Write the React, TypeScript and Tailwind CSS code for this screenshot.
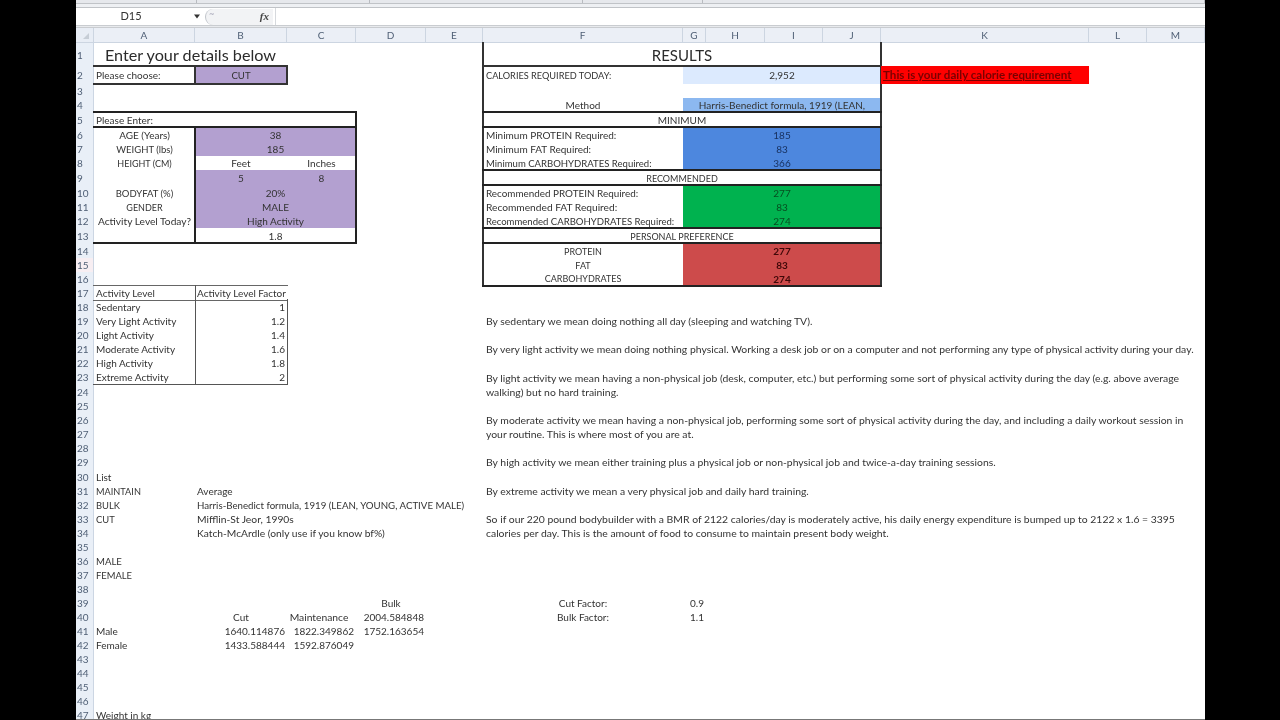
import React from "react";

const COLS: [string, number][] = [["A",101],["B",92],["C",69],["D",70],["E",57],["F",200],["G",23],["H",59],["I",58],["J",58],["K",208],["L",58],["M",58]];
const ROWS = [23,18,14,14,15,15,14,14,15,15,14,14,15,15,14,14,14,14,14,14,14,14,14,15,14,14,14,13,15,15,14,14,14,14,14,14,14,14,14,14,14,14,14,14,14,14,14];
const RIBBON = [121,173,213,120,502];
const A=2,B=3,C=4,D=5,F=7,G=8,K=12;

type P = { r:number; c:number; rs?:number; cs?:number; className?:string; children?:React.ReactNode };
function X({r,c,rs=1,cs=1,className="",children}:P){
  return <div className={"flex items-center whitespace-nowrap min-w-0 "+className} style={{gridRow:`${r+1} / span ${rs}`,gridColumn:`${c} / span ${cs}`}}>{children}</div>;
}
const L=(p:P)=><X {...p} className={"justify-start pl-[2px] "+(p.className||"")}/>;
const M=(p:P)=><X {...p} className={"justify-center "+(p.className||"")}/>;
const R=(p:P)=><X {...p} className={"justify-end pr-[2px] "+(p.className||"")}/>;
const Frame=({r,c,rs=1,cs=1,className=""}:P)=>(
  <div className={"-m-px pointer-events-none "+className} style={{gridRow:`${r+1} / span ${rs}`,gridColumn:`${c} / span ${cs}`}}/>
);

const PURPLE="bg-[#b3a0d0]";
const notes:[number,number,React.ReactNode][]=[
 [19,1,"By sedentary we mean doing nothing all day (sleeping and watching TV)."],
 [21,1,"By very light activity we mean doing nothing physical. Working a desk job or on a computer and not performing any type of physical activity during your day."],
 [23,2,<>By light activity we mean having a non-physical job (desk, computer, etc.) but performing some sort of physical activity during the day (e.g. above average<br/>walking) but no hard training.</>],
 [26,2,<>By moderate activity we mean having a non-physical job, performing some sort of physical activity during the day, and including a daily workout session in<br/>your routine. This is where most of you are at.</>],
 [29,1,"By high activity we mean either training plus a physical job or non-physical job and twice-a-day training sessions."],
 [31,1,"By extreme activity we mean a very physical job and daily hard training."],
 [33,2,<>So if our 220 pound bodybuilder with a BMR of 2122 calories/day is moderately active, his daily energy expenditure is bumped up to 2122 x 1.6 = 3395<br/>calories per day. This is the amount of food to consume to maintain present body weight.</>],
];

export default function App(){
  return (
    <div className="w-[1280px] h-[720px] bg-black flex overflow-hidden font-['Lato','Liberation_Sans',sans-serif] text-[10px] text-[#303030]">
      <div className="ml-[76px] w-[1129px] h-[720px] bg-white flex flex-col overflow-hidden blur-[0.35px] border-b border-[#777]">
        <div className="h-[3px] bg-[#e6e8ec] flex shrink-0">
          {RIBBON.map((w,i)=><div key={i} className="h-[3px] border-r border-[#b8bbc0]" style={{width:w}}/>)}
        </div>
        <div className="h-[5px] bg-[#eef0f3] border-y border-[#c0c3c7] shrink-0"/>
        <div className="h-[17px] bg-white flex items-center shrink-0">
          <div className="w-[110px] text-center text-[#333] text-[11px]">D15</div>
          <svg width="8" height="5" viewBox="0 0 8 5" className="ml-[7px]"><path d="M1 0.5h6L4 4.5z" fill="#333"/></svg>
          <div className="ml-[4px] w-[68px] h-[16px] bg-[#f2f3f5] rounded-l-full border-l border-[#c0c4ca] flex items-center">
            <span className="ml-[3px] mb-[5px] text-[#aab] text-[9px]">~</span>
            <span className="ml-auto mr-[4px] font-['Liberation_Serif',serif] italic font-bold text-[11px] text-[#444]">fx</span>
          </div>
          <div className="ml-[2px] h-[17px] w-px bg-[#d6d9dd]"/>
        </div>
        <div className="h-[3px] bg-[#e8eaed] border-y border-[#c9ccd0] shrink-0"/>
        <div className="grid text-[#333] leading-[14px]" style={{gridTemplateColumns:`18px ${COLS.map(c=>c[1]+"px").join(" ")}`,gridTemplateRows:`15px ${ROWS.map(h=>h+"px").join(" ")}`}}>
          <div className="bg-[#e8edf5] border-r border-b border-[#ccd5e1] flex items-end justify-end p-[2px]" style={{gridRow:1,gridColumn:1}}>
            <svg width="6" height="6" viewBox="0 0 6 6" className="mb-[1px] mr-[2px]"><path d="M6 0v6H0z" fill="#c6cdd6"/></svg>
          </div>
          {COLS.map(([n],i)=>(
            <div key={n} className="bg-[#ebeff6] border-r border-b border-[#ccd5e1] flex items-center justify-center text-[#4f5f75]" style={{gridRow:1,gridColumn:i+2}}>{n}</div>
          ))}
          {ROWS.map((_,i)=>(
            <div key={i} className={(i===14?"bg-[#f7eef2] ":"bg-[#e9eff7] ")+"border-r border-[#ccd6e3] flex items-center pl-[1px] text-[#4f5f75]"} style={{gridRow:i+2,gridColumn:1}}>{i+1}</div>
          ))}

          {/* Left: details */}
          <M r={1} c={A} cs={2} className="text-[16.2px] text-[#2b2b2b]">Enter your details below</M>
          <L r={2} c={A}>Please choose:</L>
          <M r={2} c={B} className={PURPLE+" text-[9.6px] pt-[2px]"}>CUT</M>
          <L r={5} c={A} cs={3}>Please Enter:</L>
          <M r={6} c={A}>AGE (Years)</M><M r={6} c={B} cs={2} className={PURPLE}>38</M>
          <M r={7} c={A} className="text-[9.5px] pt-[2px]">WEIGHT (lbs)</M><M r={7} c={B} cs={2} className={PURPLE}>185</M>
          <M r={8} c={A} className="text-[9px] pt-[2px]">HEIGHT (CM)</M><M r={8} c={B}>Feet</M><M r={8} c={C}>Inches</M>
          <M r={9} c={B} className={PURPLE}>5</M><M r={9} c={C} className={PURPLE}>8</M>
          <M r={10} c={A} className="text-[9.5px] pt-[2px]">BODYFAT (%)</M><M r={10} c={B} cs={2} className={PURPLE}>20%</M>
          <M r={11} c={A} className="text-[9px] pt-[2px]">GENDER</M><M r={11} c={B} cs={2} className={PURPLE}>MALE</M>
          <M r={12} c={A} className="text-[10.2px]">Activity Level Today?</M><M r={12} c={B} cs={2} className={PURPLE}>High Activity</M>
          <M r={13} c={B} cs={2}>1.8</M>
          <Frame r={2} c={A} className="border-y-2 border-[#333]"/>
          <Frame r={2} c={B} className="border-2 border-[#333]"/>
          <Frame r={5} c={A} cs={3} className="border-y-2 border-r-2 border-[#222]"/>
          <Frame r={6} c={A} rs={8} cs={3} className="border-r-2 border-b-2 border-[#222]"/>
          <Frame r={6} c={A} rs={8} className="border-r-2 border-[#222]"/>

          {/* Activity table */}
          <L r={17} c={A}>Activity Level</L><L r={17} c={B}>Activity Level Factor</L>
          {[["Sedentary","1"],["Very Light Activity","1.2"],["Light Activity","1.4"],["Moderate Activity","1.6"],["High Activity","1.8"],["Extreme Activity","2"]].map(([a,b],i)=>(
            <React.Fragment key={a}><L r={18+i} c={A}>{a}</L><R r={18+i} c={B}>{b}</R></React.Fragment>
          ))}
          <Frame r={17} c={A} cs={2} className="border-y border-[#666]"/>
          <Frame r={17} c={A} rs={7} className="border-r border-[#555]"/>
          <Frame r={18} c={B} rs={6} className="border-r border-[#555]"/>
          <Frame r={18} c={A} rs={6} cs={2} className="border-b border-[#555]"/>

          {/* Lists */}
          <L r={30} c={A}>List</L>
          <L r={31} c={A} className="text-[9.2px] pt-[2px]">MAINTAIN</L><L r={31} c={B}>Average</L>
          <L r={32} c={A} className="text-[9.4px] pt-[2px]">BULK</L><L r={32} c={B} className="text-[9.7px]">Harris-Benedict formula, 1919 (LEAN, YOUNG, ACTIVE MALE)</L>
          <L r={33} c={A} className="text-[9.4px] pt-[2px]">CUT</L><L r={33} c={B} className="text-[10.3px]">Mifflin-St Jeor, 1990s</L>
          <L r={34} c={B} className="text-[10.25px]">Katch-McArdle (only use if you know bf%)</L>
          <L r={36} c={A} className="text-[9.6px] pt-[2px]">MALE</L>
          <L r={37} c={A} className="text-[9.4px] pt-[2px]">FEMALE</L>
          <M r={39} c={D}>Bulk</M>
          <M r={40} c={B}>Cut</M><M r={40} c={C} className="text-[10.3px] pr-[5px]">Maintenance</M><R r={40} c={D}>2004.584848</R>
          <L r={41} c={A}>Male</L><R r={41} c={B}>1640.114876</R><R r={41} c={C}>1822.349862</R><R r={41} c={D}>1752.163654</R>
          <L r={42} c={A}>Female</L><R r={42} c={B}>1433.588444</R><R r={42} c={C}>1592.876049</R>
          <L r={47} c={A}>Weight in kg</L>
          <M r={39} c={F}>Cut Factor:</M><R r={39} c={G}>0.9</R>
          <M r={40} c={F}>Bulk Factor:</M><R r={40} c={G}>1.1</R>

          {/* Results */}
          <M r={1} c={F} cs={5} className="text-[15px] text-[#2b2b2b]">RESULTS</M>
          <L r={2} c={F} className="pl-[3px] text-[9.2px] pt-[2px]">CALORIES REQUIRED TODAY:</L>
          <M r={2} c={G} cs={4} className="bg-[#dceafe]">2,952</M>
          <M r={4} c={F}>Method</M>
          <M r={4} c={G} cs={4} className="bg-[#8cb8f0]">Harris-Benedict formula, 1919 (LEAN,</M>
          <M r={5} c={F} cs={5}>MINIMUM</M>
          {[["Minimum PROTEIN Required:","185","text-[10px]"],["Minimum FAT Required:","83","text-[10px]"],["Minimum CARBOHYDRATES Required:","366","text-[9.55px] pt-[2px]"]].map(([a,b,s],i)=>(
            <React.Fragment key={a}><L r={6+i} c={F} className={"pl-[3px] "+s}>{a}</L><M r={6+i} c={G} cs={4} className="bg-[#4d87de] text-[#17305e]">{b}</M></React.Fragment>
          ))}
          <M r={9} c={F} cs={5} className="text-[9px] pt-[2px]">RECOMMENDED</M>
          {[["Recommended PROTEIN Required:","277","text-[9.9px]"],["Recommended FAT Required:","83","text-[10.2px]"],["Recommended CARBOHYDRATES Required:","274","text-[9.55px] pt-[2px]"]].map(([a,b,s],i)=>(
            <React.Fragment key={a}><L r={10+i} c={F} className={"pl-[3px] "+s}>{a}</L><M r={10+i} c={G} cs={4} className="bg-[#00b24f] text-[#064d20]">{b}</M></React.Fragment>
          ))}
          <M r={13} c={F} cs={5} className="text-[9px] pt-[2px]">PERSONAL PREFERENCE</M>
          {[["PROTEIN","277","pt-[2px]"],["FAT","83","pt-[2px]"],["CARBOHYDRATES","274",""]].map(([a,b,s],i)=>(
            <React.Fragment key={a}><M r={14+i} c={F} className={"text-[9px] "+s}>{a}</M><M r={14+i} c={G} cs={4} className="bg-[#cd4b4b] text-[#3f0808] font-bold">{b}</M></React.Fragment>
          ))}
          <Frame r={1} c={F} rs={16} cs={5} className="border-x-2 border-[#333]"/>
          <Frame r={2} c={F} cs={5} className="border-t-2 border-[#333]"/>
          <Frame r={5} c={F} cs={5} className="border-y-2 border-[#222]"/>
          <Frame r={9} c={F} cs={5} className="border-y-2 border-[#222]"/>
          <Frame r={13} c={F} cs={5} className="border-y-2 border-[#222]"/>
          <Frame r={16} c={F} cs={5} className="border-b-2 border-[#222]"/>

          <L r={2} c={K} className="bg-[#ff0000] text-[#7a0000] font-bold underline text-[11.6px]">This is your daily calorie requirement</L>

          {notes.map(([r,rs,t])=>(
            <L key={r} r={r} rs={rs} c={F} cs={8} className="pl-[3px] text-[10.4px]"><div>{t}</div></L>
          ))}
        </div>
      </div>
    </div>
  );
}
